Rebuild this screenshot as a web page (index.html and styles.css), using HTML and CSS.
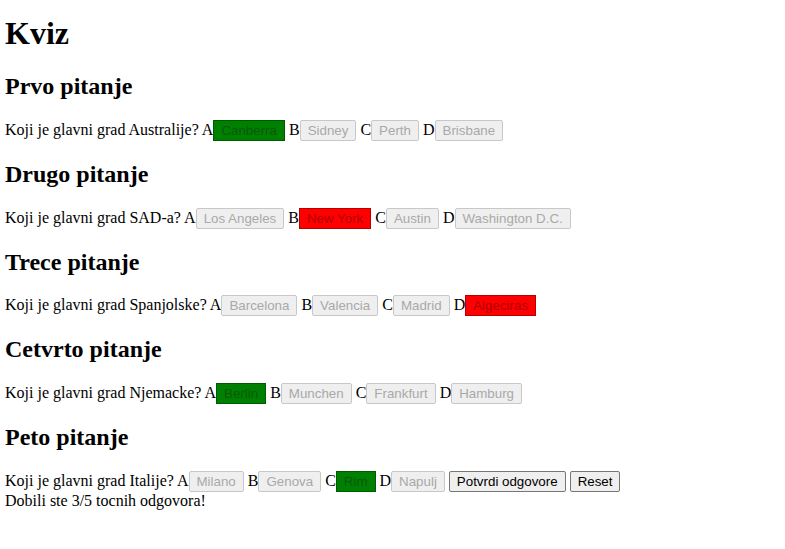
FILE: index.html
```html
<!DOCTYPE html>
<html>
<head>
<meta charset="utf-8">
<title>Kviz</title>
<link rel="stylesheet" href="styles.css">
</head>
<body>
<h1>Kviz</h1>

<h2>Prvo pitanje</h2>
<p>Koji je glavni grad Australije? A<button class="opt correct" disabled>Canberra</button> B<button class="opt" disabled>Sidney</button> C<button class="opt" disabled>Perth</button> D<button class="opt" disabled>Brisbane</button></p>

<h2>Drugo pitanje</h2>
<p>Koji je glavni grad SAD-a? A<button class="opt" disabled>Los Angeles</button> B<button class="opt wrong" disabled>New York</button> C<button class="opt" disabled>Austin</button> D<button class="opt" disabled>Washington D.C.</button></p>

<h2>Trece pitanje</h2>
<p>Koji je glavni grad Spanjolske? A<button class="opt" disabled>Barcelona</button> B<button class="opt" disabled>Valencia</button> C<button class="opt" disabled>Madrid</button> D<button class="opt wrong" disabled>Algeciras</button></p>

<h2>Cetvrto pitanje</h2>
<p>Koji je glavni grad Njemacke? A<button class="opt correct" disabled>Berlin</button> B<button class="opt" disabled>Munchen</button> C<button class="opt" disabled>Frankfurt</button> D<button class="opt" disabled>Hamburg</button></p>

<h2>Peto pitanje</h2>
<p class="last">Koji je glavni grad Italije? A<button class="opt" disabled>Milano</button> B<button class="opt" disabled>Genova</button> C<button class="opt correct" disabled>Rim</button> D<button class="opt" disabled>Napulj</button> <button class="act">Potvrdi odgovore</button> <button class="act">Reset</button><br>Dobili ste 3/5 tocnih odgovora!</p>
</body>
</html>
```

FILE: styles.css
```css
body {
  margin: 0;
  padding: 0 5px;
  font-family: "Liberation Serif", "Times New Roman", serif;
  font-size: 16px;
  color: #000;
  background: #fff;
}
h1 {
  font-size: 32px;
  font-weight: bold;
  margin: 14.5px 0 21.44px;
}
h2 {
  font-size: 24px;
  font-weight: bold;
  margin: 19.92px 0;
}
p {
  margin: 16px 0;
}
.opt, .act {
  font-family: "Liberation Sans", Arial, sans-serif;
  font-size: 13.333px;
  margin: 0;
  -webkit-appearance: none;
  appearance: none;
}
.opt {
  background: #efefef;
  color: #a9a9a9;
  border: 1px solid #c8c8c8;
  border-radius: 2px;
  padding: 2px 7px;
}
.opt.correct {
  background: #008000;
  color: #0a5a0a;
  border: 1px solid #005a00;
  border-radius: 0;
  padding: 2px 7px;
}
.opt.wrong {
  background: #ff0000;
  color: #b30000;
  border: 1px solid #b80000;
  border-radius: 0;
  padding: 2px 7px;
}
.act {
  background: #efefef;
  color: #000;
  border: 1px solid #767676;
  border-radius: 2px;
  padding: 2px 7px;
}
```
